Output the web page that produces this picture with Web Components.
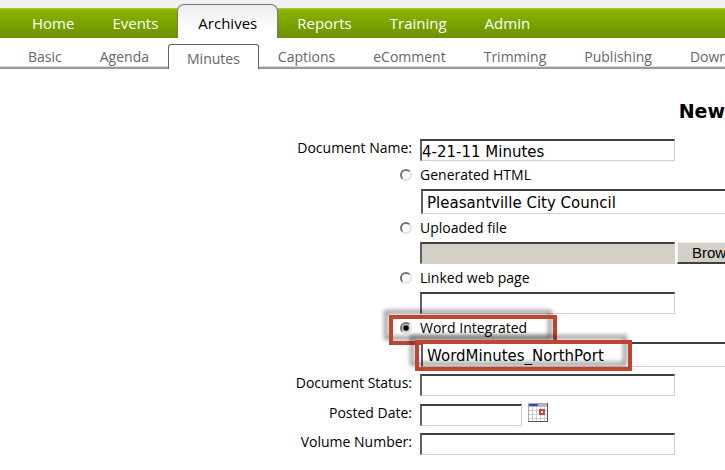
<!DOCTYPE html>
<html lang="en">
<head>
<meta charset="utf-8">
<title>New Document</title>
<style>
body {
    margin: 0;
    background: #fff;
    color: #000;
    font: 14px/20px "Open Sans", "Noto Sans", sans-serif;
    overflow-x: hidden;
}
</style>
</head>
<body>
<archive-page>
    <tab-bar slot="nav" items="Home,Events,Archives,Reports,Training,Admin" active="Archives"></tab-bar>
    <sub-tab-bar slot="subnav" items="Basic,Agenda,Minutes,Captions,eComment,Trimming,Publishing,Down" active="Minutes"></sub-tab-bar>
    <span slot="title">New</span>
    <form-field label="Document Name:" value="4-21-11 Minutes"></form-field>
    <source-picker></source-picker>
    <form-field label="Document Status:"></form-field>
    <form-field label="Posted Date:" size="short"><calendar-button></calendar-button></form-field>
    <form-field label="Volume Number:"></form-field>
</archive-page>

<script>
const fieldStyles = `
* { box-sizing: border-box; }
input[type="text"], select {
    appearance: none;
    display: block;
    flex: none;
    margin: 0;
    height: 22px;
    padding: 2px 0 0;
    border: 1px solid #d4d0c8;
    border-top: 2px solid #404040;
    border-left: 2px solid #606060;
    border-radius: 0;
    background: #fff;
    color: #000;
    font: 15px "DejaVu Sans", Verdana, sans-serif;
    outline: none;
}
input[type="text"] { width: 255px; }
`

const render = (host, markup) => {
    const template = document.createElement('template')
    template.innerHTML = markup
    host.attachShadow({ mode: 'open' }).append(template.content.cloneNode(true))
}

class ArchivePage extends HTMLElement {
    constructor() {
        super()
        render(this, `
            <style>
                :host { display: block; }
                h1 {
                    margin: 0;
                    padding: 30px 0 16px;
                    text-align: right;
                    font: bold 19px/24px "DejaVu Sans", Verdana, sans-serif;
                }
                form {
                    --label-width: 412px;
                    display: flex;
                    flex-direction: column;
                    gap: 7px;
                    overflow: hidden;
                    padding-bottom: 15px;
                }
            </style>
            <header><slot name="nav"></slot><slot name="subnav"></slot></header>
            <main>
                <h1><slot name="title"></slot></h1>
                <form><slot></slot></form>
            </main>`)
    }
}

class TabBar extends HTMLElement {
    get styles() {
        return `
            :host { display: block; padding-top: 4px; background: #f0f0f0; overflow: hidden; }
            nav {
                display: flex;
                align-items: flex-end;
                padding-left: 13px;
                background: linear-gradient(#a6c32a 0 1px, #8ab400 2px, #6b9100) bottom / 100% 30px no-repeat;
            }
            a {
                flex: none;
                padding: 0 19px;
                color: #fff;
                font-size: 15px;
                font-weight: 500;
                line-height: 30px;
                text-decoration: none;
            }
            a.active {
                padding: 3px 20px 0;
                border: 1px solid #777;
                border-bottom: 0;
                border-radius: 7px 7px 0 0;
                background: linear-gradient(#ececec, #fff 24px);
                color: #000;
            }`
    }

    connectedCallback() {
        const active = this.getAttribute('active')
        const links = this.getAttribute('items').split(',').map(item =>
            `<a href="#${item.toLowerCase()}"${item === active ? ' class="active" aria-current="page"' : ''}>${item}</a>`)
        render(this, `<style>${this.styles}</style><nav>${links.join('')}</nav>`)
    }
}

class SubTabBar extends TabBar {
    get styles() {
        return `
            :host { display: block; padding-top: 6px; background: #fff; overflow: hidden; }
            nav {
                display: flex;
                align-items: flex-end;
                padding-left: 9px;
                background: linear-gradient(#ddd 0 1px, #999 1px) bottom / 100% 3px no-repeat;
            }
            a {
                flex: none;
                padding: 0 19px 2px;
                color: #666;
                line-height: 20px;
                text-decoration: none;
            }
            a.active {
                padding: 4px 18px 0;
                border: 1px solid #666;
                border-bottom: 0;
                border-radius: 3px 3px 0 0;
                background: #fff;
            }`
    }
}

class FormField extends HTMLElement {
    connectedCallback() {
        const isShort = this.getAttribute('size') === 'short'
        render(this, `
            <style>
                ${fieldStyles}
                :host {
                    display: grid;
                    grid-template-columns: var(--label-width) 1fr;
                    column-gap: 8px;
                    align-items: center;
                }
                label { text-align: right; line-height: 18px; padding-bottom: 4px; }
                div { display: flex; align-items: center; gap: 6px; }
                input.short { width: 102px; }
            </style>
            <label for="field">${this.getAttribute('label')}</label>
            <div>
                <input type="text" id="field" class="${isShort ? 'short' : ''}" value="${this.getAttribute('value') || ''}">
                <slot></slot>
            </div>`)
    }
}

class CalendarButton extends HTMLElement {
    constructor() {
        super()
        render(this, `
            <style>
                :host { display: block; padding-bottom: 4px; }
                button { all: unset; display: block; cursor: pointer; }
                svg { display: block; }
            </style>
            <button type="button" aria-label="Pick a date">
                <svg width="20" height="19" viewBox="0 0 20 19">
                    <path d="M0 0h20v19H0z" fill="#a9a9b4"/>
                    <path d="M1 1h18v17H1z" fill="#fff"/>
                    <path d="M1 1h18v3H1z" fill="#b9b9bd"/>
                    <path d="M1 1h9v2H1z" fill="#3c46b4"/>
                    <path d="M1 7h18v1H1zM1 11h18v1H1zM1 15h18v1H1zM4 4h1v14H4zM8 4h1v14H8zM12 4h1v14h-1zM16 4h1v14h-1z" fill="#ccccd6"/>
                    <path d="M11 6h6v6h-6z" fill="#c04848"/>
                    <path d="M13 8h2v2h-2z" fill="#fff"/>
                    <path d="M19 0h1v19H0v-1h19z" fill="#55555c"/>
                </svg>
            </button>`)
    }
}

// Red outline with a soft shadow, laid over whatever is slotted in
class HighlightFrame extends HTMLElement {
    constructor() {
        super()
        render(this, `
            <style>
                :host { display: block; position: relative; }
                .frame {
                    position: absolute;
                    inset: var(--frame-inset);
                    width: var(--frame-width);
                    box-sizing: border-box;
                    border: 4px solid #be4630;
                    filter: drop-shadow(-5px -5px 2px rgba(0, 0, 0, 0.4));
                    pointer-events: none;
                }
            </style>
            <slot></slot>
            <div class="frame"></div>`)
    }
}

class SourcePicker extends HTMLElement {
    constructor() {
        super()
        render(this, `
            <style>
                ${fieldStyles}
                :host { display: block; margin-top: -7px; }
                fieldset { margin: 0; padding: 0; border: 0; min-width: 0; }
                .option {
                    display: grid;
                    grid-template-columns: var(--label-width) 1fr;
                    column-gap: 8px;
                    align-items: center;
                    height: 28px;
                }
                .field {
                    display: flex;
                    gap: 2px;
                    margin-left: calc(var(--label-width) + 8px);
                }
                .field highlight-frame { flex: 1; }
                input[type="radio"] {
                    appearance: none;
                    justify-self: end;
                    width: 12px;
                    height: 12px;
                    margin: 0;
                    border: 2px solid;
                    border-color: #707078 #e4e2dc #e4e2dc #707078;
                    border-radius: 50%;
                    background: #fff;
                }
                input[type="radio"]:checked {
                    background: radial-gradient(#000 0 2px, #fff 4px);
                }
                select {
                    flex: 1;
                    width: 100%;
                    height: 25px;
                    margin-left: 1px;
                    padding-left: 4px;
                    border-right: 0;
                }
                #file { background: #d4d0c8; }
                .browse {
                    flex: none;
                    height: 22px;
                    padding: 0 14px;
                    border: 1px solid #f4f2ee;
                    border-bottom: 2px solid #404040;
                    border-right: 2px solid #404040;
                    border-radius: 0;
                    background: #d4d0c8;
                    color: #000;
                    font: 15px "Liberation Sans", Arial, sans-serif;
                }
                .word-option { --frame-inset: 1px auto -3px 389px; --frame-width: 168px; }
                .word-field { --frame-inset: -2px auto -4px -5px; --frame-width: 217px; }
            </style>
            <fieldset aria-label="Document source">
                <div class="option">
                    <input type="radio" name="source" id="generated">
                    <label for="generated">Generated HTML</label>
                </div>
                <div class="field">
                    <select aria-label="Template"><option>Pleasantville City Council</option></select>
                </div>
                <div class="option">
                    <input type="radio" name="source" id="uploaded">
                    <label for="uploaded">Uploaded file</label>
                </div>
                <div class="field">
                    <input type="text" id="file" aria-label="File path">
                    <button type="button" class="browse">Brow</button>
                </div>
                <div class="option">
                    <input type="radio" name="source" id="linked">
                    <label for="linked">Linked web page</label>
                </div>
                <div class="field">
                    <input type="text" aria-label="Web address">
                </div>
                <highlight-frame class="word-option">
                    <div class="option">
                        <input type="radio" name="source" id="word" checked>
                        <label for="word">Word Integrated</label>
                    </div>
                </highlight-frame>
                <div class="field">
                    <highlight-frame class="word-field">
                        <select aria-label="Word template"><option>WordMinutes_NorthPort</option></select>
                    </highlight-frame>
                </div>
            </fieldset>`)
    }
}

customElements.define('archive-page', ArchivePage)
customElements.define('tab-bar', TabBar)
customElements.define('sub-tab-bar', SubTabBar)
customElements.define('form-field', FormField)
customElements.define('calendar-button', CalendarButton)
customElements.define('highlight-frame', HighlightFrame)
customElements.define('source-picker', SourcePicker)
</script>
</body>
</html>
